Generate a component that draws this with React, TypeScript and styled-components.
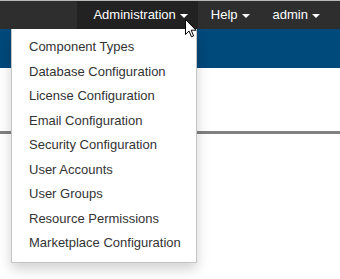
import styled, { createGlobalStyle } from "styled-components";

const GlobalStyle = createGlobalStyle`
  html, body {
    margin: 0;
    padding: 0;
    background: #fff;
    font-family: "Liberation Sans", Arial, sans-serif;
    font-size: 13px;
  }
`;

const Page = styled.div`
  position: relative;
  width: 340px;
  height: 279px;
  overflow: hidden;
  background: #fff;
`;

const TopBar = styled.nav`
  height: 28px;
  border-top: 1px solid #b8b8b8;
  background: #2e2e2e;
  display: flex;
  justify-content: flex-end;
  padding-right: 10px;
`;

const NavItem = styled.div<{ $active?: boolean; $padLeft?: number }>`
  display: flex;
  align-items: center;
  gap: 4px;
  padding: 0 10px 0 ${(p) => p.$padLeft ?? 13}px;
  background: ${(p) => (p.$active ? "#222" : "transparent")};
  color: #fff;
  font-size: 13px;
  line-height: 28px;
`;

const Caret = styled.span`
  display: inline-block;
  width: 0;
  height: 0;
  margin-top: 1px;
  border-top: 4px solid #fff;
  border-left: 4px solid transparent;
  border-right: 4px solid transparent;
`;

const Banner = styled.div`
  height: 39px;
  background: #00497b;
`;

const Content = styled.div`
  padding-top: 63px;
`;

const Rule = styled.div`
  height: 3px;
  background: #808080;
`;

const Dropdown = styled.ul`
  position: absolute;
  left: 11px;
  top: 29px;
  width: 184px;
  margin: 0;
  padding: 6px 0;
  list-style: none;
  background: #fff;
  border: 1px solid #c4c4c4;
  border-top: none;
  box-shadow: 0 6px 12px rgba(0, 0, 0, 0.18);
`;

const MenuItem = styled.li`
  padding: 0 17px;
  line-height: 24.5px;
  color: #333;
  font-size: 13px;
  white-space: nowrap;
`;

const Cursor = styled.svg`
  position: absolute;
  left: 185px;
  top: 19px;
`;

const menu = [
  "Component Types",
  "Database Configuration",
  "License Configuration",
  "Email Configuration",
  "Security Configuration",
  "User Accounts",
  "User Groups",
  "Resource Permissions",
  "Marketplace Configuration",
];

export default function App() {
  return (
    <Page>
      <GlobalStyle />
      <TopBar>
        <NavItem $active $padLeft={16}>
          Administration <Caret />
        </NavItem>
        <NavItem>
          Help <Caret />
        </NavItem>
        <NavItem>
          admin <Caret />
        </NavItem>
      </TopBar>
      <Banner />
      <Content>
        <Rule />
      </Content>
      <Dropdown>
        {menu.map((m) => (
          <MenuItem key={m}>{m}</MenuItem>
        ))}
      </Dropdown>
      <Cursor width="13" height="19" viewBox="0 0 13 19">
        <path
          d="M0.5 0.5 L0.5 15.5 L4 12 L6.5 17.8 L8.6 16.9 L6.2 11.2 L11 11.2 Z"
          fill="#fff"
          stroke="#000"
          strokeWidth="1"
          strokeLinejoin="miter"
        />
      </Cursor>
    </Page>
  );
}
